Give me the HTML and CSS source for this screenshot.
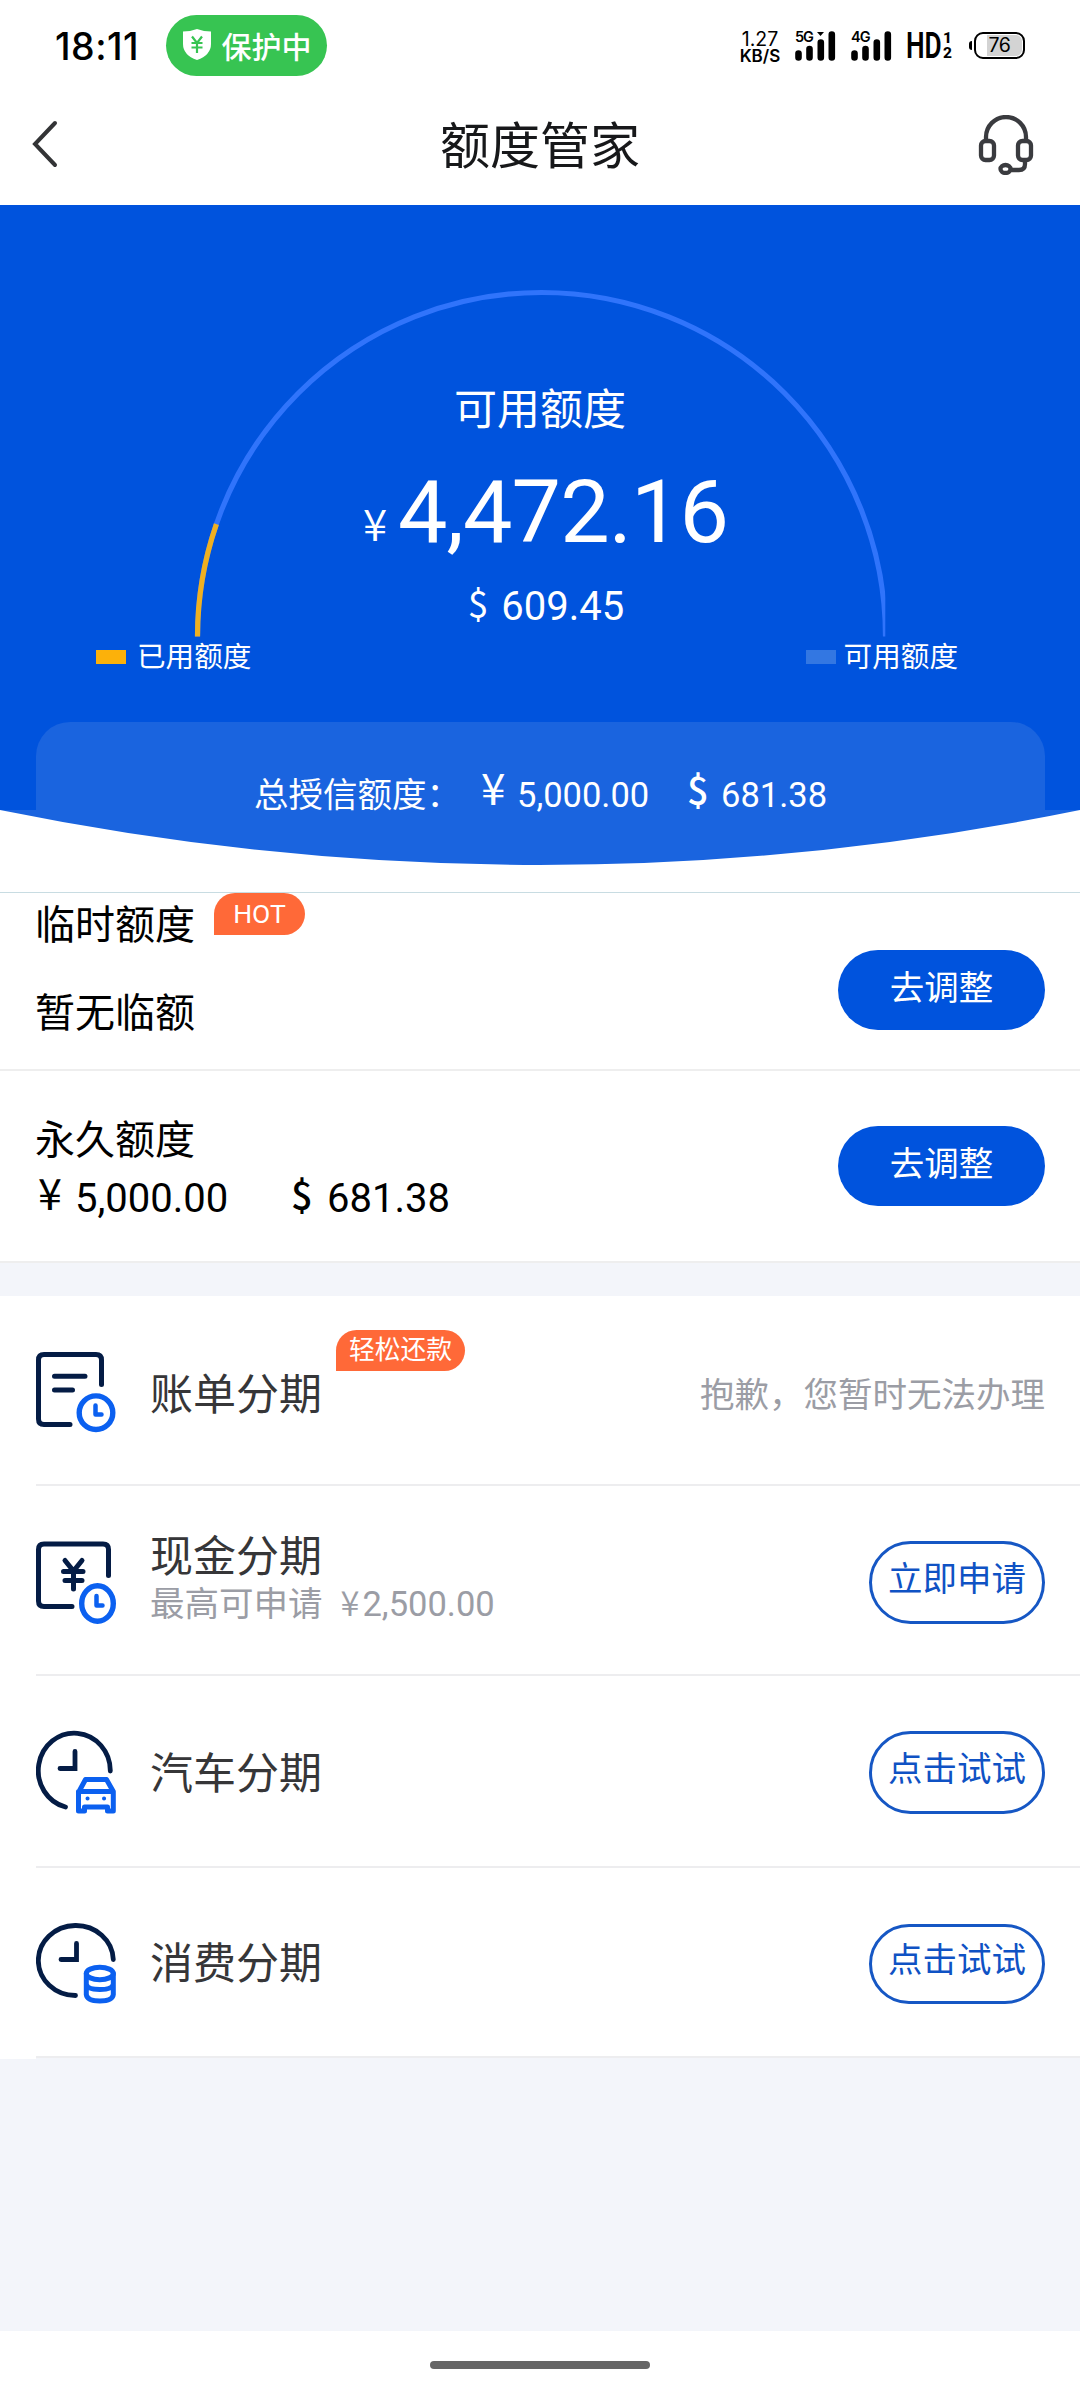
FILE: index.html
```html
<!DOCTYPE html>
<html lang="zh-CN">
<head>
<meta charset="utf-8">
<title>额度管家</title>
<link rel="stylesheet" href="styles.css">
</head>
<body>
<header class="status">
  <span class="clock">18:11</span>
  <span class="guard">
    <svg class="shield" viewBox="0 0 28 31"><path fill="#fff" d="M14 0Q21 2.500 28 2.500V15Q28 26 14 31Q0 26 0 15V2.500Q7 2.500 14 0Z"/><path d="M9 7.500L14 14L19 7.500M14 14V24M8.500 14H19.500M8.500 18.500H19.500" fill="none" stroke="#37c452" stroke-width="2.200"/></svg>
    保护中
  </span>
  <span class="speed">1.27<br>KB/S</span>
  <span class="signal">
    <svg viewBox="0 0 41 30"><path d="M3.500 22.500V26.500M14.500 18V26.500M25.800 11.500V26.500M36.800 3.500V26.500" stroke="#000" stroke-width="6.600" stroke-linecap="round"/><path d="M22 1H29L25.500 5Z"/></svg>
    <span class="gen">5G</span>
  </span>
  <span class="signal second">
    <svg viewBox="0 0 41 30"><path d="M3.500 22.500V26.500M14.500 18V26.500M25.800 11.500V26.500M36.800 3.500V26.500" stroke="#000" stroke-width="6.600" stroke-linecap="round"/></svg>
    <span class="gen">4G</span>
  </span>
  <span class="hd"><span class="hd-text">HD</span><span class="sims"><span>1</span><span>2</span></span></span>
  <span class="battery"><span class="level">76</span></span>
</header>

<nav class="nav">
  <svg class="back" viewBox="0 0 28 50"><path d="M25 4L5 25L25 46" fill="none" stroke="#333436" stroke-width="4" stroke-linecap="round" stroke-linejoin="miter"/></svg>
  <h1>额度管家</h1>
  <svg class="headset" viewBox="0 0 56 60"><g fill="none" stroke="#3a3b3f" stroke-width="4.300"><path d="M8 25V22A20 20 0 0 1 48 22V25"/><rect x="3" y="26" width="13" height="19" rx="4.500"/><rect x="40" y="26" width="13" height="19" rx="4.500"/><path d="M47 46V49Q47 55 41 55H33"/><ellipse cx="27.500" cy="54" rx="5" ry="4"/></g></svg>
</nav>

<section class="hero">
  <div class="gauge">
    <svg class="arc" viewBox="0 205 1080 432" width="1080" height="432">
      <clipPath id="gauge-box"><path d="M190 280H885.300V637H190Z"/></clipPath>
      <g fill="none" stroke-width="5.200" clip-path="url(#gauge-box)">
        <path stroke="#3074fb" d="M197.500 636.500A344 344 0 0 1 885.500 636.500"/>
        <path stroke="#efb021" stroke-dasharray="19.100 180" pathLength="180" d="M197.500 636.500A344 344 0 0 1 885.500 636.500"/>
      </g>
    </svg>
    <div class="figures">
      <div class="label">可用额度</div>
      <div class="main-amount"><span class="cur">¥</span><span>4,472.16</span></div>
      <div class="usd"><span class="cur">$</span><span>609.45</span></div>
    </div>
  </div>
  <div class="legend">
    <span class="key"><i class="swatch used"></i>已用额度</span>
    <span class="key"><i class="swatch free"></i>可用额度</span>
  </div>
  <div class="total">
    <span class="total-label">总授信额度：</span>
    <span class="cur yen">¥</span><span class="cny">5,000.00</span>
    <span class="cur dollar">$</span><span>681.38</span>
  </div>
  <svg class="curve" viewBox="0 0 1080 82" width="1080" height="82"><path fill="#fff" d="M0 0V82H1080V0Q540 110 0 0Z"/></svg>
</section>

<section class="limit temp">
  <div class="limit-info">
    <div class="limit-title">临时额度<span class="tag hot">HOT</span></div>
    <div class="limit-none">暂无临额</div>
  </div>
  <button class="btn solid">去调整</button>
</section>
<section class="limit fixed">
  <div class="limit-info">
    <div class="limit-title">永久额度</div>
    <div class="limit-values"><span class="cur yen">¥</span><span class="cny">5,000.00</span><span class="cur dollar">$</span><span>681.38</span></div>
  </div>
  <button class="btn solid">去调整</button>
</section>

<main class="services">
  <div class="row">
    <svg class="icon" viewBox="36 1345 80 90"><g fill="none" stroke="#041c45" stroke-width="5" stroke-linecap="round"><path d="M101.500 1384.500V1360Q101.500 1354.500 96 1354.500H44Q38.500 1354.500 38.500 1360V1419Q38.500 1424.500 44 1424.500H70M54.500 1376.300H85M54.500 1390H72.500"/><g stroke="#0b60f0" stroke-width="5.400"><circle cx="96" cy="1412.700" r="16.800"/><path d="M95.500 1405.500V1414.500H101.500" stroke-width="4.500" stroke-linejoin="round"/></g></g></svg>
    <div class="name">账单分期</div>
    <span class="tag easy">轻松还款</span>
    <span class="note">抱歉，您暂时无法办理</span>
  </div>
  <div class="row cash">
    <svg class="icon" viewBox="36 1536 80 90"><g fill="none" stroke="#041c45" stroke-width="5" stroke-linecap="round"><path d="M108.500 1575.500V1549.500Q108.500 1544 103 1544H44Q38.500 1544 38.500 1549.500V1601Q38.500 1606.500 44 1606.500H72M65 1560.500L73.500 1571L82 1560.500M73.500 1571V1589M63.500 1571.500H83M65 1580.500H82"/><g stroke="#0b60f0" stroke-width="5.400"><ellipse cx="97.500" cy="1603.500" rx="15.800" ry="17.700"/><path d="M96.500 1596V1605.500H102.500" stroke-width="4.500" stroke-linejoin="round"/></g></g></svg>
    <div class="name">现金分期<div class="sub">最高可申请<span class="sub-cur">¥</span><span>2,500.00</span></div></div>
    <button class="btn outline">立即申请</button>
  </div>
  <div class="row car">
    <svg class="icon" viewBox="36 1726 80 90"><g fill="none" stroke="#041c45" stroke-width="4.800" stroke-linecap="round"><path d="M110.300 1771A36 37.500 0 1 0 65.500 1807M75 1751.500V1768.500H60"/><g stroke="#0b60f0" stroke-width="5" stroke-linejoin="round"><path d="M79 1791.500L85.500 1779.500H106.500L113.300 1791.500V1811H107.500V1807H84.500V1811H78.500V1791.500ZM80 1791.500H112"/><path d="M87.500 1798.500H87.600M104 1798.500H104.100" stroke-width="4"/></g></g></svg>
    <div class="name">汽车分期</div>
    <button class="btn outline">点击试试</button>
  </div>
  <div class="row spend">
    <svg class="icon" viewBox="36 1918 80 90"><g fill="none" stroke="#041c45" stroke-width="4.800" stroke-linecap="round"><path d="M113.300 1959.500A37.500 35 0 1 0 75.500 1995.500M76.500 1943.500V1959.500H61"/><g stroke="#0b60f0" stroke-width="5"><ellipse cx="99.800" cy="1973.500" rx="13.500" ry="6.200"/><path d="M86.300 1973.500V1994.500Q87 2001 99.800 2001Q112.500 2001 113.300 1994.500V1973.500M86.300 1984Q87 1989.500 99.800 1989.500Q112.500 1989.500 113.300 1984"/></g></g></svg>
    <div class="name">消费分期</div>
    <button class="btn outline short">点击试试</button>
  </div>
</main>

<footer class="home"><span class="pill"></span></footer>
</body>
</html>
```

FILE: styles.css
```css
* { box-sizing: border-box; }
body {
  margin: 0;
  width: 1080px;
  height: 2400px;
  overflow: hidden;
  display: flex;
  flex-direction: column;
  background: #f3f5fa;
  color: #000;
  font-family: Roboto, "Noto Sans CJK SC", sans-serif;
  font-size: 34.5px;
}
svg { display: block; flex: none; }
span { white-space: nowrap; }
.cur, .sub-cur { font-family: "Noto Sans CJK SC", sans-serif; }

/* status bar */
.status {
  height: 91px;
  flex: none;
  display: flex;
  align-items: flex-start;
  padding: 15px 55px 0 55px;
  background: #fff;
  font-family: Inter, "Noto Sans CJK SC", sans-serif;
}
.clock { width: 111px; font-size: 37.500px; font-weight: 450; line-height: 64px; letter-spacing: 0.5px; }
.guard {
  width: 161px;
  height: 61px;
  display: flex;
  align-items: center;
  gap: 11px;
  padding: 0 0 2px 16.5px;
  border-radius: 31px;
  background: #37c452;
  color: #fff;
  font-size: 30px;
  font-weight: 500;
}
.shield { width: 28px; height: 31px; }
.speed { width: 42px; margin: 16px 0 0 412px; font-size: 17px; font-weight: 600; line-height: 17px; text-align: center; }
.speed::first-line { font-size: 19.5px; font-weight: 400; }
.signal { position: relative; width: 41px; height: 30px; margin: 16px 0 0 14px; }
.signal svg { width: 41px; height: 30px; }
.second { margin-left: 15px; }
.gen { position: absolute; left: 0; top: -1px; font: 600 14.5px/14px Inter, sans-serif; letter-spacing: -1px; }
.hd { display: flex; gap: 2px; margin: 16px 0 0 14px; width: 47px; }
.hd-text { width: 35px; font: 600 36px/31px Roboto, sans-serif; transform: scaleX(.73); transform-origin: left; }
.sims { display: flex; flex-direction: column; font: 800 15.5px/15px Roboto, sans-serif; }
.battery {
  position: relative;
  width: 51px;
  height: 27px;
  margin: 17px 0 0 21px;
  border: 2px solid #000;
  border-radius: 9px;
  background: linear-gradient(90deg, #fff 11px, #d3d3d3 11px);
  box-shadow: inset 0 0 0 1px #fff;
  text-align: center;
}
.battery::before { content: ""; position: absolute; left: -7px; top: 7px; width: 3px; height: 9px; border-radius: 3px 0 0 3px; background: #000; }
.level { display: block; font-size: 19.5px; line-height: 23px; letter-spacing: -0.5px; }

/* title bar */
.nav { height: 114px; flex: none; display: flex; justify-content: space-between; padding: 24px 46px 0 30px; background: #fff; }
.back { width: 28px; height: 50px; margin-top: 4px; }
.nav h1 { margin: 0 0 0 44px; color: #17181a; font-size: 50px; font-weight: 400; line-height: 64px; }
.headset { width: 56px; height: 60px; }

/* credit overview */
.hero { flex: none; display: flex; flex-direction: column; height: 687px; background: #0053dd; color: #fff; }
.gauge { display: grid; height: 432px; }
.arc, .figures { grid-area: 1 / 1; }
.figures { display: flex; flex-direction: column; align-items: center; padding-top: 175px; }
.label { font-size: 43px; line-height: 60px; }
.main-amount { display: flex; align-items: baseline; gap: 11px; height: 100px; margin: 22px 0 0 11px; font-size: 88px; line-height: 100px; letter-spacing: -0.9px; }
.main-amount .cur { position: relative; top: -1px; font-size: 44px; font-weight: 350; line-height: 50px; letter-spacing: 0; }
.usd { display: flex; align-items: baseline; gap: 13px; height: 50px; margin: 17px 0 0 12px; font-size: 40px; line-height: 50px; }
.usd .cur { position: relative; top: -2px; font-size: 37px; }
.legend { display: flex; justify-content: space-between; padding: 0 122px 0 96px; font-size: 28.600px; line-height: 42px; height: 40px; }
.key { display: flex; align-items: center; gap: 11px; }
.key:last-child { gap: 8px; }
.swatch { width: 30px; height: 14px; }
.used { background: #fcb10a; }
.free { background: #3377e2; }
.total {
  position: relative;
  height: 88px;
  margin: 45px 35px 0 36px;
  padding: 51px 0 0 218px;
  display: flex;
  align-items: baseline;
  border-radius: 34px 34px 0 0;
  background: #1a64df;
  line-height: 30px;
}
.total-label { width: 227px; }
.total .cur, .limit-values .cur { position: relative; top: -2px; }
.total .yen { width: 36px; font-size: 44px; }
.total .dollar { width: 34px; font-size: 38px; font-weight: 500; }
.total .cny { width: 170px; }
.curve { background: #1a64df; }

/* limits */
.limit { flex: none; display: flex; justify-content: space-between; padding: 0 35px; background: #fff; border-bottom: 2px solid #eee; }
.temp { height: 179px; border-top: 1px solid #c8dce2; }
.fixed { height: 192px; }
.limit-title, .limit-none, .limit-values { font-size: 40px; line-height: 50px; }
.temp .limit-title { display: flex; gap: 19px; padding-top: 8px; }
.limit-none { margin-top: 38px; }
.fixed .limit-title { padding-top: 45px; }
.limit-values { display: flex; align-items: baseline; height: 50px; margin-top: 2px; padding-left: 3px; }
.limit-values .cur { width: 36px; font-size: 38px; font-weight: 500; }
.limit-values .yen { width: 37px; font-size: 43px; font-weight: 400; }
.limit-values .cny { width: 216px; }
.tag { border-radius: 21px 21px 21px 0; background: #ff6938; color: #fff; text-align: center; }
.hot { width: 91px; height: 42px; margin-top: -8px; font-size: 26.500px; line-height: 41px; }
.btn { flex: none; margin: 0; padding: 0 0 5px; font: inherit; line-height: 40px; white-space: nowrap; text-align: center; }
.solid { width: 207px; height: 80px; margin-top: 55px; border: 0; border-radius: 40px; background: #0053dd; color: #fff; }
.temp .solid { margin-top: 57px; }

/* instalment services */
.services { flex: none; height: 763px; margin-top: 33px; background: linear-gradient(90deg, #fff 36px, transparent 36px); }
.row { display: flex; height: 190px; margin-left: 36px; padding-right: 35px; border-bottom: 2px solid #ededef; background: #fff; }
.car { height: 192px; }
.icon { width: 80px; height: 90px; margin-top: 49px; }
.cash .icon, .car .icon, .spend .icon { margin-top: 50px; }
.name { margin: 69px 0 0 34px; color: #363638; font-size: 43px; line-height: 60px; }
.cash .name { margin-top: 41px; }
.car .name { margin-top: 68px; }
.spend .name { margin-top: 66px; }
.sub { display: flex; align-items: baseline; margin-top: -6px; color: #9b9da5; font-size: 34.500px; line-height: 40px; }
.sub-cur { margin-left: 18px; margin-right: 3px; font-weight: 350; }
.easy { width: 129px; height: 41px; margin: 34px 0 0 14px; font-size: 25.800px; line-height: 41px; }
.note { margin: 78px 0 0 auto; color: #9b9da5; line-height: 42px; }
.outline { width: 176px; height: 83px; margin: 55px 0 0 auto; padding-bottom: 7px; border: 3px solid #1657c4; border-radius: 42px; background: #fff; color: #0f52c4; }
.short { height: 80px; margin-top: 56px; padding-bottom: 8px; }

/* gesture bar */
.home { flex: none; height: 69px; margin-top: auto; padding-top: 30px; display: flex; justify-content: center; align-items: flex-start; background: #fff; }
.pill { width: 220px; height: 8px; border-radius: 4px; background: #666; }
```
